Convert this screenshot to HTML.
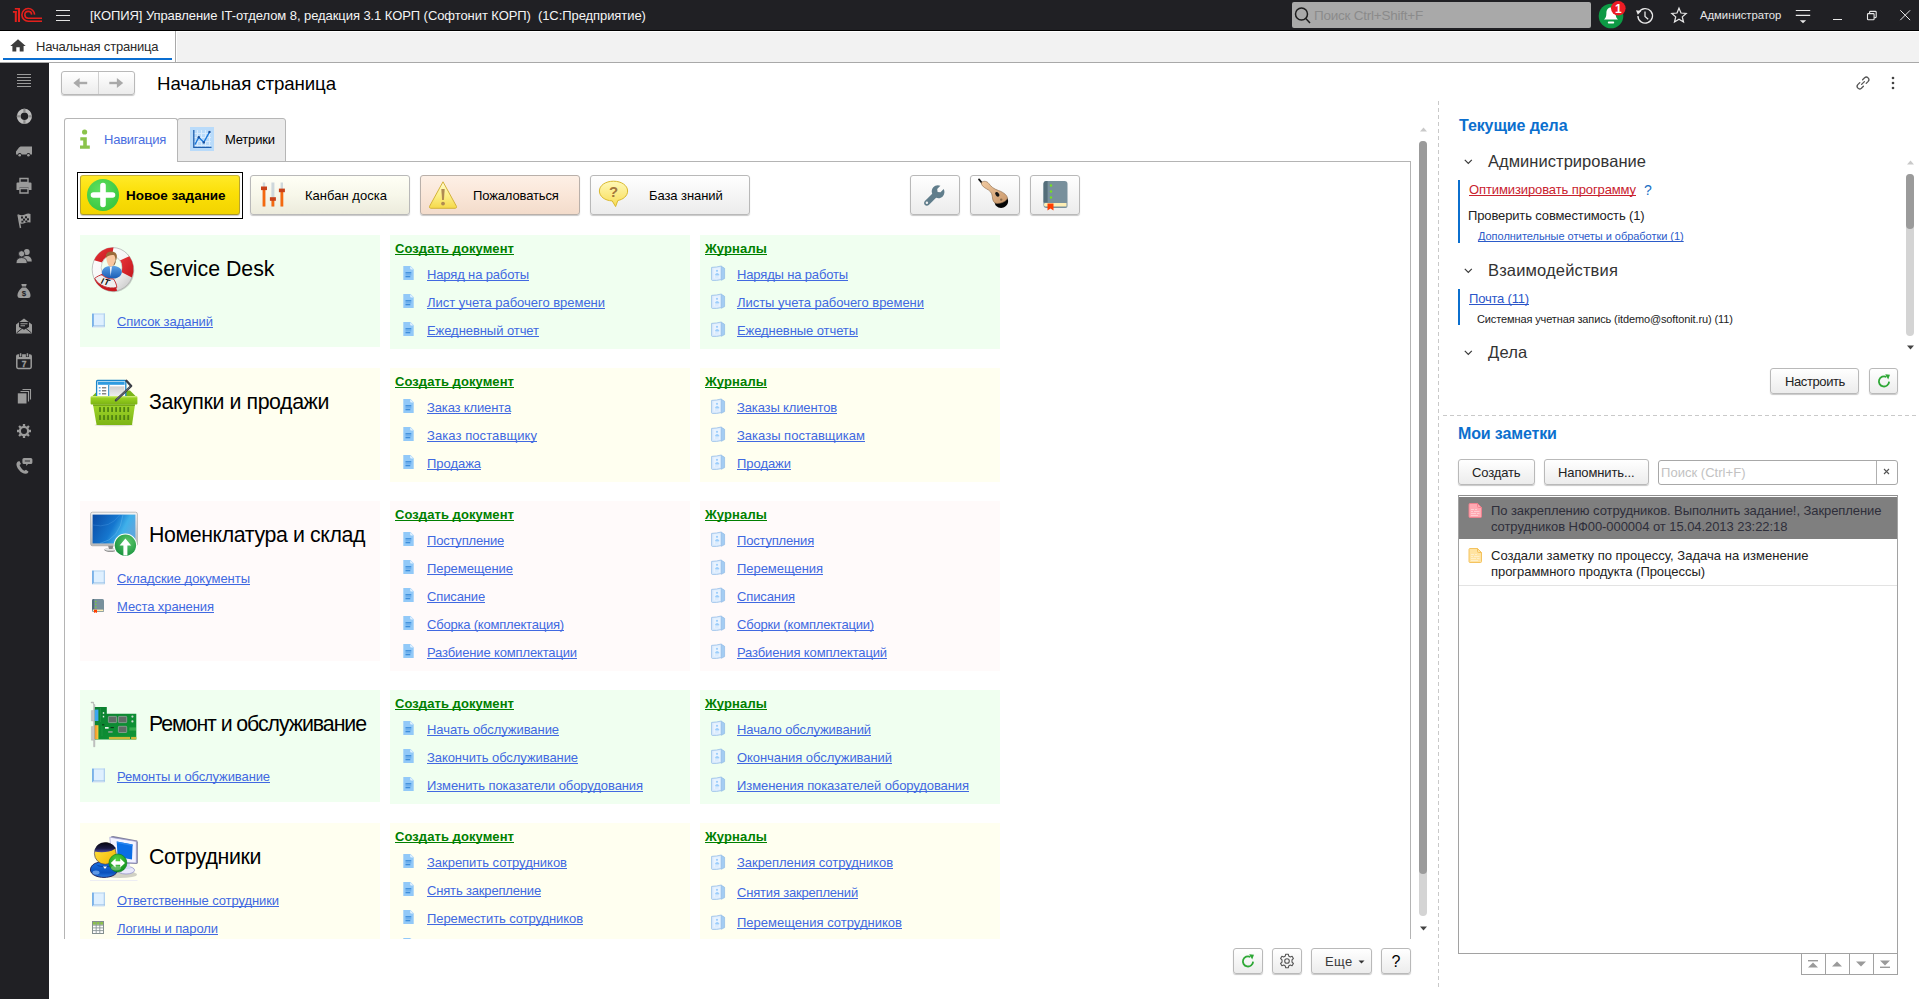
<!DOCTYPE html><html lang="ru"><head><meta charset="utf-8"><title>Начальная страница</title><style>
*{box-sizing:border-box;margin:0;padding:0}
html,body{width:1919px;height:999px;overflow:hidden;background:#fff}
body{font-family:"Liberation Sans",sans-serif;font-size:13px;color:#000;position:relative}
.a{position:absolute}
.t{position:absolute;white-space:pre;line-height:16px;height:16px}
.lnk{color:#4169e1;text-decoration:underline;text-underline-offset:1px;text-decoration-skip-ink:none;text-decoration-thickness:1px}
.gh{color:#008000;font-weight:bold;text-decoration:underline;text-underline-offset:1px;text-decoration-skip-ink:none;text-decoration-thickness:1px}
.btn{position:absolute;border:1px solid #b9b9b9;border-radius:3px;background:linear-gradient(#ffffff,#ececec);box-shadow:0 1px 1px rgba(0,0,0,.22)}
.card{position:absolute}
svg{position:absolute;overflow:visible}
</style></head><body>
<div class="a" style="left:0px;top:0px;width:1919px;height:30px;background:#202024"></div>
<div class="a" style="left:0px;top:30px;width:1919px;height:1px;background:#000"></div>
<svg style="left:12px;top:7px" width="32" height="17" viewBox="0 0 32 17"><g fill="#e3201c"><rect x="5.900" y="1" width="2.100" height="14"/><rect x="2.800" y="1" width="5.200" height="1.600"/><rect x="2.800" y="4" width="2" height="11"/><rect x="0.900" y="4" width="3.900" height="1.800"/></g><g fill="none" stroke="#e3201c" stroke-width="1.600"><path d="M22.600 7.600A6.350 6.350 0 1 0 16.300 14.200H30"/><path d="M19.650 7.600A3.400 3.400 0 1 0 16.300 11.200H30"/></g></svg>
<svg style="left:56px;top:9px" width="15" height="13" viewBox="0 0 15 13"><g stroke="#e2e2e2" stroke-width="1.150"><path d="M0 1.5H14M0 6.5H14M0 11.5H14"/></g></svg>
<div class="t " style="left:90px;top:8px;font-size:13px;color:#f4f4f4;letter-spacing:-0.07px;">[КОПИЯ] Управление IT-отделом 8, редакция 3.1 КОРП (Софтонит КОРП)  (1С:Предприятие)</div>
<div class="a" style="left:1292px;top:2px;width:299px;height:26px;background:#a9a9a9;border-radius:2px"></div>
<svg style="left:1294px;top:6px" width="18" height="18" viewBox="0 0 18 18"><g fill="none" stroke="#1c1c1c" stroke-width="1.5"><circle cx="7.5" cy="8" r="6"/><path d="M11.8 12.6L16 17"/></g></svg>
<div class="t " style="left:1314px;top:8px;font-size:13.5px;color:#8b8b8b;letter-spacing:-0.233px;">Поиск Ctrl+Shift+F</div>
<svg style="left:1598px;top:2px" width="28" height="28" viewBox="0 0 28 28"><circle cx="13" cy="14" r="12.3" fill="#0d9a45"/><path d="M13 5.6c-3.3 0-4.6 2.7-4.6 5.6 0 3.3-1 5-2.4 6.3h14c-1.4-1.3-2.4-3-2.4-6.3 0-2.9-1.300-5.600-4.600-5.600z" fill="#fff"/><rect x="9.800" y="19.6" width="6.4" height="1.8" rx=".9" fill="#fff"/><circle cx="20.3" cy="6.300" r="7.300" fill="#ec1c24"/><text x="20.3" y="10.600" font-size="12" font-weight="bold" fill="#fff" text-anchor="middle" font-family="Liberation Sans,sans-serif">1</text></svg>
<svg style="left:1635px;top:6px" width="20" height="20" viewBox="0 0 20 20"><g fill="none" stroke="#e8e8e8" stroke-width="1.300"><path d="M4 6A7.300 7.300 0 1 1 2.900 10"/><path d="M10 5.600V10.400L13.200 13.200"/></g><path d="M1 4.200L6.300 5L2.800 8.800Z" fill="#e8e8e8"/></svg>
<svg style="left:1671px;top:7px" width="16" height="16" viewBox="0 0 16 16"><path d="M8 1.200L10 6L15.200 6.500L11.300 9.900L12.500 15L8 12.300L3.500 15L4.700 9.900L0.800 6.500L6 6Z" fill="none" stroke="#e8e8e8" stroke-width="1.250" stroke-linejoin="miter"/></svg>
<div class="t " style="left:1700px;top:7px;font-size:11.3px;color:#e6e6e6;letter-spacing:-0.009px;">Администратор</div>
<svg style="left:1795px;top:9px" width="16" height="15" viewBox="0 0 16 15"><g stroke="#e8e8e8" stroke-width="1.100"><path d="M0.800 1.500H15.200M0.800 6.400H15.200"/></g><path d="M4.800 11.200H11.200L8 14.200Z" fill="#e8e8e8"/></svg>
<div class="a" style="left:1833px;top:19px;width:9px;height:1px;background:#e8e8e8"></div>
<svg style="left:1866px;top:10px" width="12" height="12" viewBox="0 0 12 12"><g fill="none" stroke="#e8e8e8" stroke-width="1.100"><rect x="1.500" y="3.600" width="6.600" height="6.200" rx=".8"/><path d="M3.600 3.400V2.200Q3.600 1.400 4.400 1.400H9.400Q10.200 1.400 10.200 2.200V6.800Q10.200 7.600 9.400 7.600H8.300"/></g></svg>
<svg style="left:1899px;top:9px" width="13" height="13" viewBox="0 0 13 13"><g stroke="#e8e8e8" stroke-width="1"><path d="M1.300 1.300L11.100 11.100M11.100 1.300L1.300 11.100"/></g></svg>
<div class="a" style="left:0px;top:31px;width:1919px;height:31px;background:#f2f2f2;border-top:1px solid #fff"></div>
<div class="a" style="left:0px;top:31px;width:175px;height:32px;background:#fff"></div>
<div class="a" style="left:175px;top:31px;width:1px;height:31px;background:#a9a9a9"></div>
<div class="a" style="left:176px;top:31px;width:1px;height:31px;background:#fff"></div>
<div class="a" style="left:0px;top:62px;width:1919px;height:1px;background:#a9a9a9"></div>
<div class="a" style="left:3px;top:58px;width:169px;height:2px;background:#0a6ed1"></div>
<svg style="left:10px;top:39px" width="16" height="13" viewBox="0 0 16 13"><path d="M8 0.300L0.300 7H2.400V12.600H6.300V8.300H9.700V12.600H13.600V7H15.700Z" fill="#3d3d3d"/></svg>
<div class="t " style="left:36px;top:39px;font-size:13px;color:#2a2a2a;letter-spacing:-0.19px;">Начальная страница</div>
<div class="a" style="left:0px;top:63px;width:49px;height:936px;background:#202024"></div>
<svg style="left:14px;top:70px" width="20" height="20" viewBox="0 0 20 20"><g stroke="#9b9b9b" stroke-width="1"><path d="M3 4.500H17M3 7.500H17M3 10.500H17M3 13.500H17M3 16.500H17"/></g></svg>
<svg style="left:14px;top:106px" width="20" height="20" viewBox="0 0 20 20"><circle cx="10.400" cy="10.300" r="5.700" fill="none" stroke="#bdbdbd" stroke-width="3.800"/><g fill="#8a8a8a"><rect x="9.300" y="2.700" width="2.200" height="3.800"/><rect x="9.300" y="14.100" width="2.200" height="3.800"/><rect x="2.800" y="9.200" width="3.800" height="2.200"/><rect x="14.200" y="9.200" width="3.800" height="2.200"/></g></svg>
<svg style="left:14px;top:141px" width="20" height="20" viewBox="0 0 20 20"><path d="M6.500 5.500H18V13.500H16.300A1.900 1.900 0 0 0 12.600 13.500H7.600A1.900 1.900 0 0 0 3.900 13.500H2V10.500L5 6.500Z" fill="#9b9b9b"/><circle cx="5.700" cy="14.200" r="1.300" fill="#9b9b9b"/><circle cx="14.400" cy="14.200" r="1.300" fill="#9b9b9b"/></svg>
<svg style="left:14px;top:176px" width="20" height="20" viewBox="0 0 20 20"><path d="M6 2.500H14V6.500H6Z" fill="none" stroke="#9b9b9b" stroke-width="1.400"/><path d="M2.500 7.500Q2.500 6.500 3.500 6.500H16.500Q17.500 6.500 17.500 7.500V14H14.500V11.500H5.500V14H2.500Z" fill="#9b9b9b"/><path d="M6 12.500H14V17H6Z" fill="none" stroke="#9b9b9b" stroke-width="1.400"/></svg>
<svg style="left:14px;top:211px" width="20" height="20" viewBox="0 0 20 20"><path d="M4 3.500L6.500 17" stroke="#9b9b9b" stroke-width="1.400"/><path d="M4.500 3.500Q8 5 11 3.500T16.500 3L16.500 11.500Q13 11 11 12T5.800 12.500Z" fill="#9b9b9b"/><g fill="#202024"><rect x="7" y="5.500" width="2" height="2"/><rect x="11" y="5.300" width="2" height="2"/><rect x="9" y="7.600" width="2" height="2"/><rect x="13" y="7.300" width="2" height="2"/><rect x="7.400" y="9.700" width="2" height="1.800"/><rect x="11.300" y="9.500" width="2" height="1.800"/></g></svg>
<svg style="left:14px;top:246px" width="20" height="20" viewBox="0 0 20 20"><circle cx="12.800" cy="6" r="2.900" fill="#9b9b9b"/><path d="M8 15.500Q8 10 12.800 10T17.800 15.500Z" fill="#9b9b9b"/><circle cx="7.600" cy="7.800" r="3.100" fill="#9b9b9b" stroke="#202024" stroke-width=".8"/><path d="M2 17.500Q2 11.600 7.600 11.600T13.200 17.500Z" fill="#9b9b9b" stroke="#202024" stroke-width=".8"/></svg>
<svg style="left:14px;top:281px" width="20" height="20" viewBox="0 0 20 20"><path d="M7.300 3H12.700L12 5.500H8Z" fill="#9b9b9b"/><path d="M8 6.500H12Q16.500 10.500 16.500 14.500Q16.500 17 14 17H6Q3.500 17 3.500 14.500Q3.500 10.500 8 6.500Z" fill="#9b9b9b"/><text x="10" y="15.200" font-size="8" font-weight="bold" fill="#202024" text-anchor="middle" font-family="Liberation Sans,sans-serif">$</text></svg>
<svg style="left:14px;top:316px" width="20" height="20" viewBox="0 0 20 20"><path d="M2 8.500L10 2.500L18 8.500V17.500H2Z" fill="#9b9b9b"/><path d="M5 6H15V11L10 13.800L5 11Z" fill="#202024"/><path d="M6.500 7.700H13.500M6.500 9.700H11" stroke="#9b9b9b" stroke-width="1.100"/><path d="M2.500 17L8 12.500M17.500 17L12 12.500" stroke="#202024" stroke-width=".9"/></svg>
<svg style="left:14px;top:351px" width="20" height="20" viewBox="0 0 20 20"><rect x="2.800" y="4" width="14.400" height="13.400" rx="1.300" fill="none" stroke="#9b9b9b" stroke-width="1.500"/><rect x="2.800" y="4" width="14.400" height="4.200" fill="#9b9b9b"/><path d="M6.600 2V6M13.400 2V6" stroke="#202024" stroke-width="3"/><path d="M6.600 2.200V5.600M13.400 2.200V5.600" stroke="#9b9b9b" stroke-width="1.500"/><text x="10" y="15.800" font-size="8.500" font-weight="bold" fill="#9b9b9b" text-anchor="middle" font-family="Liberation Sans,sans-serif" stroke="#9b9b9b" stroke-width=".3">7</text></svg>
<svg style="left:14px;top:386px" width="20" height="20" viewBox="0 0 20 20"><path d="M8.500 3.500H16.500V13.500" fill="none" stroke="#9b9b9b" stroke-width="1.100"/><path d="M6.500 5.500H14.500V15.500" fill="none" stroke="#9b9b9b" stroke-width="1.100"/><rect x="3.800" y="7.300" width="8.700" height="10.200" fill="#9b9b9b"/></svg>
<svg style="left:14px;top:421px" width="20" height="20" viewBox="0 0 20 20"><circle cx="10" cy="10" r="4.100" fill="none" stroke="#9b9b9b" stroke-width="2.200"/><g stroke="#9b9b9b" stroke-width="2.300"><path d="M10 3V5.400M10 14.600V17M3 10H5.400M14.600 10H17M5.050 5.050L6.750 6.750M13.250 13.250L14.950 14.950M5.050 14.950L6.750 13.250M13.250 6.750L14.950 5.050"/></g></svg>
<svg style="left:14px;top:456px" width="20" height="20" viewBox="0 0 20 20"><path d="M2.600 7.200Q1.800 10 5 14T12 17.800Q13.800 17.600 14.600 15.800L12 13.800L10.300 14.800Q8.600 14 7.200 12T5.600 9L7 8L5.400 5Q3 5.600 2.600 7.200Z" fill="#9b9b9b"/><path d="M10 2H16.800Q18.400 2 18.400 3.600V6.400Q18.400 8 16.800 8H14L12.200 10V8H10Q8.400 8 8.400 6.400V3.600Q8.400 2 10 2Z" fill="#9b9b9b"/><path d="M10.800 5H16" stroke="#202024" stroke-width=".9"/></svg>
<div class="btn" style="left:61px;top:71px;width:74px;height:24px;"></div>
<div class="a" style="left:98px;top:72px;width:1px;height:22px;background:#d0d0d0"></div>
<svg style="left:73px;top:77px" width="15" height="12" viewBox="0 0 15 12"><path d="M14.200 6H4" stroke="#a9a9a9" stroke-width="2.400" fill="none"/><path d="M0.300 6L6.600 0.900V11.100Z" fill="#a9a9a9"/></svg>
<svg style="left:109px;top:77px" width="15" height="12" viewBox="0 0 15 12"><path d="M0.300 6H10.500" stroke="#a9a9a9" stroke-width="2.400" fill="none"/><path d="M14.200 6L7.900 0.900V11.100Z" fill="#a9a9a9"/></svg>
<div class="t " style="left:157px;top:76px;font-size:18.67px;color:#000;letter-spacing:-0.084px;height:24px;line-height:24px;margin-top:-4px;">Начальная страница</div>
<svg style="left:1854px;top:74px" width="18" height="18" viewBox="0 0 18 18"><g fill="none" stroke="#555" stroke-width="1.300" stroke-linecap="round"><path d="M7.600 10.400L10.400 7.600"/><path d="M8.600 5.800L10.600 3.800A2.550 2.550 0 0 1 14.200 7.400L12.200 9.400"/><path d="M9.400 12.200L7.400 14.200A2.550 2.550 0 0 1 3.800 10.600L5.800 8.600"/></g></svg>
<svg style="left:1891px;top:76px" width="4" height="14" viewBox="0 0 4 14"><g fill="#444"><circle cx="2" cy="2" r="1.300"/><circle cx="2" cy="7" r="1.300"/><circle cx="2" cy="12" r="1.300"/></g></svg>
<div class="a" style="left:177px;top:118px;width:109px;height:44px;background:#ebebeb;border:1px solid #b6b6b6;border-radius:3px 3px 0 0"></div>
<div class="a" style="left:64px;top:161px;width:1347px;height:778px;border:1px solid #b4b4b4;border-bottom:none"></div>
<div class="a" style="left:64px;top:118px;width:114px;height:44px;background:#fff;border:1px solid #b6b6b6;border-bottom:none;border-radius:3px 3px 0 0"></div>
<svg style="left:79px;top:129px" width="12" height="21" viewBox="0 0 12 21"><circle cx="5.600" cy="3" r="2.600" fill="#8bc34a"/><path d="M1.300 8.200H7.800V16.400H10.800V19.800H1V16.400H4.200V11.400H1.300Z" fill="#8bc34a"/></svg>
<div class="t " style="left:104px;top:132px;font-size:13px;color:#4a6ee0;letter-spacing:-0.237px;">Навигация</div>
<svg style="left:190px;top:127px" width="24" height="24" viewBox="0 0 24 24"><rect width="24" height="24" fill="#b9dbfa"/><g stroke="#d9ecfd" stroke-width="1"><path d="M7.500 3V21M11.500 3V21M15.500 3V21M19.500 3V21M3 6.500H21M3 10.500H21M3 14.500H21M3 18.500H21"/></g><path d="M3.800 3V20.400H21.500" fill="none" stroke="#1f5fae" stroke-width="1.300"/><path d="M5 17.500L8.800 10.200L13.800 15.400L19.500 5" fill="none" stroke="#1976d8" stroke-width="1.400"/><g fill="#1b4f9a"><circle cx="8.800" cy="10.200" r="1.200"/><circle cx="13.800" cy="15.400" r="1.200"/><circle cx="19.500" cy="5" r="1.200"/></g></svg>
<div class="t " style="left:225px;top:132px;font-size:13px;color:#000;letter-spacing:-0.203px;">Метрики</div>
<div class="a" style="left:65px;top:162px;width:1345px;height:777px;overflow:hidden">
<div class="a" style="left:12px;top:10px;width:166px;height:47px;border:1px solid #000"></div>
<div class="btn" style="left:15px;top:13px;width:160px;height:40px;background:linear-gradient(#ffea28,#fbdf08 45%,#f2d400);border-color:#c7b23a #b9a52e #a8962a"></div>
<svg style="left:22px;top:17px" width="32" height="32" viewBox="0 0 32 32"><defs><radialGradient id="gpl" cx=".4" cy=".35" r=".75"><stop offset="0" stop-color="#5fe060"/><stop offset="1" stop-color="#36c43c"/></radialGradient></defs><circle cx="16" cy="16" r="16" fill="url(#gpl)"/><path d="M16 6.500V25.500M6.500 16H25.500" stroke="#fff" stroke-width="5.600" stroke-linecap="round"/></svg>
<div class="t " style="left:61px;top:26px;font-size:13.5px;color:#000;font-weight:bold;letter-spacing:-0.008px;">Новое задание</div>
<div class="btn" style="left:185px;top:13px;width:160px;height:40px;background:linear-gradient(#fffff6,#f7f7ea 50%,#ecebdc)"></div>
<svg style="left:195px;top:20px" width="26" height="26" viewBox="0 0 26 26"><g><rect x="2.800" y="0.500" width="2.400" height="24" fill="#cfd8dc"/><rect x="11.400" y="0.500" width="3" height="24" fill="#cfd8dc"/><rect x="20.600" y="0.500" width="2.400" height="24" fill="#cfd8dc"/><rect x="2.600" y="6" width="2.800" height="18.500" fill="#f4690f"/><rect x="11.500" y="17" width="2.800" height="7.500" fill="#f4690f"/><rect x="20.500" y="8.500" width="2.800" height="16" fill="#f4690f"/><rect x="1" y="4.500" width="6" height="3.600" fill="#c8421a"/><rect x="9.900" y="15.200" width="6" height="3.600" fill="#c8421a"/><rect x="18.900" y="6.600" width="6" height="3.600" fill="#c8421a"/></g></svg>
<div class="t " style="left:240px;top:26px;font-size:13px;color:#000;letter-spacing:0.027px;">Канбан доска</div>
<div class="btn" style="left:355px;top:13px;width:160px;height:40px;background:linear-gradient(#fdf0e6,#fae6d8 50%,#f3dccb);border-color:#b9b0aa"></div>
<svg style="left:363px;top:18px" width="30" height="30" viewBox="0 0 30 30"><defs><linearGradient id="gw" x1="0" y1="0" x2="0" y2="1"><stop offset="0" stop-color="#fffbd0"/><stop offset=".5" stop-color="#fdf08a"/><stop offset="1" stop-color="#f5d94a"/></linearGradient></defs><path d="M15 1.800L28.500 26.400Q29 28 27.300 28.300H2.700Q1 28 1.500 26.400Z" fill="url(#gw)" stroke="#d4b23a" stroke-width="1" stroke-linejoin="round"/><path d="M13.300 9H16.700L15.900 20H14.100Z" fill="#b08a52"/><circle cx="15" cy="23.600" r="1.900" fill="#b08a52"/></svg>
<div class="t " style="left:408px;top:26px;font-size:13px;color:#000;letter-spacing:-0.133px;">Пожаловаться</div>
<div class="btn" style="left:525px;top:13px;width:160px;height:40px;"></div>
<svg style="left:533px;top:18px" width="32" height="30" viewBox="0 0 32 30"><defs><linearGradient id="gq" x1="0" y1="0" x2="0" y2="1"><stop offset="0" stop-color="#fff9b8"/><stop offset="1" stop-color="#f8dc55"/></linearGradient></defs><path d="M15.500 1.200C23.500 1.200 29.600 5.400 29.600 11C29.600 16 25 19.600 19.800 20.500L17.600 26.600L14.200 20.900C6.800 20.600 1.400 16.400 1.400 11C1.400 5.400 7.500 1.200 15.500 1.200Z" fill="url(#gq)" stroke="#d9b92e" stroke-width="1"/><text x="15.500" y="16.500" font-size="15" font-weight="bold" fill="#a3763c" text-anchor="middle" font-family="Liberation Sans,sans-serif">?</text></svg>
<div class="t " style="left:584px;top:26px;font-size:13px;color:#000;letter-spacing:-0.082px;">База знаний</div>
<div class="btn" style="left:845px;top:13px;width:50px;height:40px;"></div>
<svg style="left:858px;top:21px" width="24" height="24" viewBox="0 0 24 24"><path d="M20.700 6.100L17.500 9.300L14.600 8.900L14.200 6L17.400 2.800C14.900 1.700 12 2.300 10.300 4.300C8.600 6.200 8.300 8.700 9.200 10.800L1.900 18.100C0.800 19.200 0.800 20.900 1.900 22C3 23.100 4.700 23.100 5.800 22L13.100 14.700C15.300 15.600 17.900 15.200 19.700 13.400C21.600 11.500 22 8.500 20.700 6.100ZM3.900 21.100A1.250 1.250 0 1 1 3.900 18.600A1.250 1.250 0 0 1 3.900 21.100Z" fill="#607d8b" fill-rule="evenodd"/></svg>
<div class="btn" style="left:905px;top:13px;width:50px;height:40px;"></div>
<svg style="left:912px;top:15px" width="34" height="34" viewBox="0 0 34 34"><defs><linearGradient id="gs" x1="0" y1="0" x2="1" y2="1"><stop offset="0" stop-color="#f0c9a0"/><stop offset="1" stop-color="#c9976a"/></linearGradient></defs><path d="M2 2.400L5 6" stroke="#111" stroke-width="1.800" stroke-linecap="round"/><path d="M17.800 24.500C17 29 22 32 26.500 30.500C30.500 29 32.500 24.500 30 20.500Z" fill="#050505"/><path d="M4.600 5.400C6.500 3.600 10 4 11.800 6.500C14 9.500 16.500 11.800 21.500 13.500C27 15.400 30.800 18.800 30.300 21.600C29.800 24 24 26.800 19.600 26.400C16.400 26 15.600 23 15.300 19.400C15 15.400 12.500 13.500 9.500 11.800C6.500 10.200 3.800 7.800 4.600 5.400Z" fill="url(#gs)" stroke="#8a6a4a" stroke-width=".6"/><ellipse cx="20.300" cy="17.300" rx="2.600" ry="1.700" transform="rotate(50 20.300 17.300)" fill="#151515"/><circle cx="24.200" cy="22.600" r="1.200" fill="#8a6a4a"/></svg>
<div class="btn" style="left:965px;top:13px;width:50px;height:40px;"></div>
<svg style="left:978px;top:19px" width="25" height="30" viewBox="0 0 25 30"><path d="M3.500 0H21.500Q24.500 0 24.500 3V25Q24.500 27 22.500 27H3.500Q0.500 27 0.500 24V3Q0.500 0 3.500 0Z" fill="#78909c"/><path d="M3.500 0H4.600V21.500H0.500V3Q0.500 0 3.500 0Z" fill="#546e7a"/><path d="M2 22H23.500V25.400H2Q1 25.400 1 23.700Q1 22 2 22Z" fill="#fdeeb5"/><path d="M4.500 22.600H10.500V29.600L7.500 27.600L4.500 29.600Z" fill="#ff3d00"/><g fill="#76e01f"><circle cx="8" cy="4.500" r="1.200"/><circle cx="8" cy="10.500" r="1.200"/><circle cx="8" cy="16.500" r="1.200"/></g></svg>
<div class="a" style="left:15px;top:73px;width:300px;height:112px;background:#f0fff0"></div>
<div class="a" style="left:325px;top:73px;width:300px;height:114px;background:#f0fff0"></div>
<div class="a" style="left:635px;top:73px;width:300px;height:114px;background:#f0fff0"></div>
<svg style="left:25px;top:83px" width="48" height="48" viewBox="0 0 48 48"><defs><linearGradient id="lbw" x1="0" y1="0" x2="1" y2="1"><stop offset="0" stop-color="#ffffff"/><stop offset=".6" stop-color="#f4f4f4"/><stop offset="1" stop-color="#bdbdbd"/></linearGradient><linearGradient id="lbs" x1="0" y1="0" x2="0" y2="1"><stop offset="0" stop-color="#5aa0e6"/><stop offset="1" stop-color="#1a5cb4"/></linearGradient><linearGradient id="lbr" x1="0" y1="0" x2="1" y2="1"><stop offset="0" stop-color="#e8363a"/><stop offset="1" stop-color="#c4161c"/></linearGradient></defs><ellipse cx="23.7" cy="25.4" rx="20.6" ry="21.8" fill="#777" opacity=".35"/><ellipse cx="22.8" cy="24.4" rx="20.6" ry="21.8" fill="url(#lbw)" stroke="#a9a9a9" stroke-width=".7"/><path d="M4.13 15.19A20.6 21.8 0 0 1 23.52 2.61L21.96 10.81A10.4 11.8 0 0 0 12.17 17.61Z" fill="url(#lbr)"/><path d="M39.25 11.28A20.6 21.8 0 0 1 41.90 32.57L31.24 27.02A10.4 11.8 0 0 0 29.91 15.50Z" fill="url(#lbr)"/><path d="M27.08 45.72A20.6 21.8 0 0 1 4.61 34.63L12.42 28.14A10.4 11.8 0 0 0 23.76 34.14Z" fill="#c8181e"/><ellipse cx="21.6" cy="22.6" rx="10.4" ry="11.8" fill="#f0fff0" stroke="#b4b4b4" stroke-width=".6"/><path d="M11.800 27.400C12.400 22.800 16.500 21.200 19.500 21.200L24.500 21C28.500 21.400 31.800 23.600 31.800 27.400C31.400 31.200 27.200 33.600 22 33.600C16.800 33.600 12 31.400 11.800 27.400Z" fill="url(#lbs)"/><path d="M19.800 22L22 21.600L20.600 31Z" fill="#eef3fa"/><path d="M16.300 12C16.300 8.800 18.500 7.600 20.800 7.600C23.400 7.600 25.300 9.200 25.300 12.400C25.300 15.400 24.300 18.200 23.400 20C22.400 22 19.400 22 18.300 20C17.200 18 16.300 15 16.300 12Z" fill="#f9c7a0"/><path d="M23.400 20C24 19 24.600 17.500 25 16L25.800 16.600C25.400 18.600 24.600 20 23.800 21Z" fill="#8a5a30"/><path d="M16 12.800C15.200 8.600 18 6.600 21 6.600C24.800 6.600 27.400 8.600 26.800 12.400C26.600 14.200 26 15.800 25.200 16.800C25.600 14 25.200 11.600 24.200 10.200C21.800 9.600 18.200 10 16 12.800Z" fill="#9a6a3a"/><path d="M4.600 33.400C7.400 31.200 10 30 12 29.800C15 32.800 19.500 34.200 23.500 34C25.200 36.400 26.600 39.400 26.800 42.400C19 44.400 8.800 41 4.600 33.400Z" fill="#efefef" stroke="#c0252a" stroke-width=".9"/><text x="10.600" y="38.400" font-size="8.500" font-weight="bold" fill="#0a0a0a" transform="rotate(15 10.600 38.400)" font-family="Liberation Sans,sans-serif" font-style="italic" letter-spacing=".6">IT</text></svg>
<div class="t " style="left:84px;top:99px;font-size:21.33px;color:#000;letter-spacing:-0.012px;height:26px;line-height:26px;margin-top:-5px;">Service Desk</div>
<svg style="left:27px;top:151px" width="13" height="15" viewBox="0 0 13 15"><rect x="0" y=".6" width="13" height="14" rx=".8" fill="#dff0ff"/><rect x="0" y=".4" width="13" height="1.300" fill="#c2dcf3"/><rect x="11.700" y=".6" width="1.300" height="13" fill="#b0d0ee"/><rect x="0" y="12.400" width="13" height="1.200" fill="#9cc2e8"/><rect x="0.500" y="13.600" width="12" height="1" fill="#dfe9f0"/><path d="M0 .8H1.900V12.600L0 14.400Z" fill="#7ab1e8"/></svg>
<div class="t lnk" style="left:52px;top:152px;font-size:13px;letter-spacing:-0.041px;">Список заданий</div>
<div class="t gh" style="left:330px;top:79px;font-size:13px;letter-spacing:0.068px;">Создать документ</div>
<svg style="left:338px;top:104px" width="11" height="14" viewBox="0 0 11 14"><path d="M0.300 0H7.400L10.700 3.300V14H0.300Z" fill="#92c9f8"/><path d="M7.200 0.200L10.500 3.500H8.200Q7.200 3.500 7.200 2.500Z" fill="#e3f2ff"/><rect x="2.500" y="6.100" width="5.800" height="1.400" fill="#3d8edb"/><rect x="2.500" y="7.800" width="5.800" height="1.800" fill="#6fb0ec"/><rect x="2.500" y="10" width="4.800" height="1.300" fill="#3d8edb"/></svg>
<div class="t lnk" style="left:362px;top:105px;font-size:13px;letter-spacing:-0.141px;">Наряд на работы</div>
<svg style="left:338px;top:132px" width="11" height="14" viewBox="0 0 11 14"><path d="M0.300 0H7.400L10.700 3.300V14H0.300Z" fill="#92c9f8"/><path d="M7.200 0.200L10.500 3.500H8.200Q7.200 3.500 7.200 2.500Z" fill="#e3f2ff"/><rect x="2.500" y="6.100" width="5.800" height="1.400" fill="#3d8edb"/><rect x="2.500" y="7.800" width="5.800" height="1.800" fill="#6fb0ec"/><rect x="2.500" y="10" width="4.800" height="1.300" fill="#3d8edb"/></svg>
<div class="t lnk" style="left:362px;top:133px;font-size:13px;letter-spacing:-0.027px;">Лист учета рабочего времени</div>
<svg style="left:338px;top:160px" width="11" height="14" viewBox="0 0 11 14"><path d="M0.300 0H7.400L10.700 3.300V14H0.300Z" fill="#92c9f8"/><path d="M7.200 0.200L10.500 3.500H8.200Q7.200 3.500 7.200 2.500Z" fill="#e3f2ff"/><rect x="2.500" y="6.100" width="5.800" height="1.400" fill="#3d8edb"/><rect x="2.500" y="7.800" width="5.800" height="1.800" fill="#6fb0ec"/><rect x="2.500" y="10" width="4.800" height="1.300" fill="#3d8edb"/></svg>
<div class="t lnk" style="left:362px;top:161px;font-size:13px;letter-spacing:-0.065px;">Ежедневный отчет</div>
<div class="t gh" style="left:640px;top:79px;font-size:13px;letter-spacing:0.114px;">Журналы</div>
<svg style="left:646px;top:103px" width="14" height="16" viewBox="0 0 14 16"><path d="M10.300 1.200L13.600 3.300V13.600L10.300 15.300Z" fill="#a4cdf3" stroke="#86b3e2" stroke-width=".6"/><path d="M0.600 2.400Q5.500 2.300 10.300 1V14.600Q5.500 15.800 1.300 15.400Q0.600 15.300 0.600 14.600Z" fill="#dcecfd" stroke="#94bce8" stroke-width=".8"/><rect x="2.600" y="3.400" width="6.400" height="10" fill="#e9f3ff"/><circle cx="6" cy="5.800" r="1.100" fill="#9ccdfb"/><path d="M3.800 10Q6 6.200 8.600 10Q6.200 11 3.800 10Z" fill="#9ccdfb"/><rect x="4" y="11.600" width="3.600" height=".8" fill="#c3defa"/></svg>
<div class="t lnk" style="left:672px;top:105px;font-size:13px;letter-spacing:-0.153px;">Наряды на работы</div>
<svg style="left:646px;top:131px" width="14" height="16" viewBox="0 0 14 16"><path d="M10.300 1.200L13.600 3.300V13.600L10.300 15.300Z" fill="#a4cdf3" stroke="#86b3e2" stroke-width=".6"/><path d="M0.600 2.400Q5.500 2.300 10.300 1V14.600Q5.500 15.800 1.300 15.400Q0.600 15.300 0.600 14.600Z" fill="#dcecfd" stroke="#94bce8" stroke-width=".8"/><rect x="2.600" y="3.400" width="6.400" height="10" fill="#e9f3ff"/><circle cx="6" cy="5.800" r="1.100" fill="#9ccdfb"/><path d="M3.800 10Q6 6.200 8.600 10Q6.200 11 3.800 10Z" fill="#9ccdfb"/><rect x="4" y="11.600" width="3.600" height=".8" fill="#c3defa"/></svg>
<div class="t lnk" style="left:672px;top:133px;font-size:13px;letter-spacing:-0.038px;">Листы учета рабочего времени</div>
<svg style="left:646px;top:159px" width="14" height="16" viewBox="0 0 14 16"><path d="M10.300 1.200L13.600 3.300V13.600L10.300 15.300Z" fill="#a4cdf3" stroke="#86b3e2" stroke-width=".6"/><path d="M0.600 2.400Q5.500 2.300 10.300 1V14.600Q5.500 15.800 1.300 15.400Q0.600 15.300 0.600 14.600Z" fill="#dcecfd" stroke="#94bce8" stroke-width=".8"/><rect x="2.600" y="3.400" width="6.400" height="10" fill="#e9f3ff"/><circle cx="6" cy="5.800" r="1.100" fill="#9ccdfb"/><path d="M3.800 10Q6 6.200 8.600 10Q6.200 11 3.800 10Z" fill="#9ccdfb"/><rect x="4" y="11.600" width="3.600" height=".8" fill="#c3defa"/></svg>
<div class="t lnk" style="left:672px;top:161px;font-size:13px;letter-spacing:-0.08px;">Ежедневные отчеты</div>
<div class="a" style="left:15px;top:206px;width:300px;height:112px;background:#fffff0"></div>
<div class="a" style="left:325px;top:206px;width:300px;height:114px;background:#fffff0"></div>
<div class="a" style="left:635px;top:206px;width:300px;height:114px;background:#fffff0"></div>
<svg style="left:25px;top:216px" width="48" height="48" viewBox="0 0 48 48"><defs><linearGradient id="bkg" x1="0" y1="0" x2="0" y2="1"><stop offset="0" stop-color="#9fd52a"/><stop offset="1" stop-color="#7db515"/></linearGradient><linearGradient id="bkr" x1="0" y1="0" x2="0" y2="1"><stop offset="0" stop-color="#d8f08a"/><stop offset=".25" stop-color="#98d020"/><stop offset="1" stop-color="#7cb414"/></linearGradient><linearGradient id="bkp" x1="0" y1="0" x2="0" y2="1"><stop offset="0" stop-color="#cfcfcf"/><stop offset="1" stop-color="#f2f2f2"/></linearGradient></defs><ellipse cx="24" cy="47" rx="19.500" ry="1.300" fill="#000" opacity=".13"/><path d="M2 18.400L8 12.600H40L46 18.400Z" fill="#79b417"/><rect x="6.600" y="2.500" width="29.200" height="18" rx="1" fill="#fff" stroke="#1b86c9" stroke-width="1.300"/><rect x="7.800" y="3.800" width="26.800" height="3" fill="#2e9be0"/><rect x="18.200" y="7" width="1.100" height="12" fill="#1b86c9"/><rect x="20" y="8.400" width="14.400" height="11" fill="url(#bkp)"/><g fill="#3a9be0"><rect x="8.800" y="9.200" width="1.800" height="1.200"/><rect x="8.800" y="12.200" width="1.800" height="1.200"/><rect x="8.800" y="15.200" width="1.800" height="1.200"/></g><g fill="#6b6b6b"><rect x="12" y="9.200" width="4.200" height="1.200"/><rect x="12" y="12.200" width="4.200" height="1.200"/><rect x="12" y="15.200" width="4.200" height="1.200"/></g><path d="M0.600 19Q0.600 18 1.600 18H46.400Q47.400 18 47.400 19V25.400Q47.400 26.400 46.400 26.400H1.600Q0.600 26.400 0.600 25.400Z" fill="url(#bkr)"/><path d="M3 26.400H45L42 46.900H6.600Z" fill="url(#bkg)"/><path d="M3 26.400H45L44.800 27.800H3.200Z" fill="#6a9c12"/><rect x="9.10" y="29.1" width="1.800" height="5" rx=".5" fill="#4f8212"/><rect x="13.13" y="29.1" width="1.800" height="5" rx=".5" fill="#4f8212"/><rect x="17.16" y="29.1" width="1.800" height="5" rx=".5" fill="#4f8212"/><rect x="21.19" y="29.1" width="1.800" height="5" rx=".5" fill="#4f8212"/><rect x="25.22" y="29.1" width="1.800" height="5" rx=".5" fill="#4f8212"/><rect x="29.25" y="29.1" width="1.800" height="5" rx=".5" fill="#4f8212"/><rect x="33.28" y="29.1" width="1.800" height="5" rx=".5" fill="#4f8212"/><rect x="37.31" y="29.1" width="1.800" height="5" rx=".5" fill="#4f8212"/><rect x="9.10" y="37" width="1.800" height="5" rx=".5" fill="#4f8212"/><rect x="13.13" y="37" width="1.800" height="5" rx=".5" fill="#4f8212"/><rect x="17.16" y="37" width="1.800" height="5" rx=".5" fill="#4f8212"/><rect x="21.19" y="37" width="1.800" height="5" rx=".5" fill="#4f8212"/><rect x="25.22" y="37" width="1.800" height="5" rx=".5" fill="#4f8212"/><rect x="29.25" y="37" width="1.800" height="5" rx=".5" fill="#4f8212"/><rect x="33.28" y="37" width="1.800" height="5" rx=".5" fill="#4f8212"/><rect x="37.31" y="37" width="1.800" height="5" rx=".5" fill="#4f8212"/><path d="M25.900 22.400L41.200 8L36.400 2.700" fill="none" stroke="#3a3d45" stroke-width="2.300" stroke-linecap="round" stroke-linejoin="round"/><path d="M26.300 22L40.200 8.600" stroke="#8d939c" stroke-width=".7"/></svg>
<div class="t " style="left:84px;top:232px;font-size:21.33px;color:#000;letter-spacing:-0.403px;height:26px;line-height:26px;margin-top:-5px;">Закупки и продажи</div>
<div class="t gh" style="left:330px;top:212px;font-size:13px;letter-spacing:0.068px;">Создать документ</div>
<svg style="left:338px;top:237px" width="11" height="14" viewBox="0 0 11 14"><path d="M0.300 0H7.400L10.700 3.300V14H0.300Z" fill="#92c9f8"/><path d="M7.200 0.200L10.500 3.500H8.200Q7.200 3.500 7.200 2.500Z" fill="#e3f2ff"/><rect x="2.500" y="6.100" width="5.800" height="1.400" fill="#3d8edb"/><rect x="2.500" y="7.800" width="5.800" height="1.800" fill="#6fb0ec"/><rect x="2.500" y="10" width="4.800" height="1.300" fill="#3d8edb"/></svg>
<div class="t lnk" style="left:362px;top:238px;font-size:13px;letter-spacing:-0.142px;">Заказ клиента</div>
<svg style="left:338px;top:265px" width="11" height="14" viewBox="0 0 11 14"><path d="M0.300 0H7.400L10.700 3.300V14H0.300Z" fill="#92c9f8"/><path d="M7.200 0.200L10.500 3.500H8.200Q7.200 3.500 7.200 2.500Z" fill="#e3f2ff"/><rect x="2.500" y="6.100" width="5.800" height="1.400" fill="#3d8edb"/><rect x="2.500" y="7.800" width="5.800" height="1.800" fill="#6fb0ec"/><rect x="2.500" y="10" width="4.800" height="1.300" fill="#3d8edb"/></svg>
<div class="t lnk" style="left:362px;top:266px;font-size:13px;letter-spacing:0.08px;">Заказ поставщику</div>
<svg style="left:338px;top:293px" width="11" height="14" viewBox="0 0 11 14"><path d="M0.300 0H7.400L10.700 3.300V14H0.300Z" fill="#92c9f8"/><path d="M7.200 0.200L10.500 3.500H8.200Q7.200 3.500 7.200 2.500Z" fill="#e3f2ff"/><rect x="2.500" y="6.100" width="5.800" height="1.400" fill="#3d8edb"/><rect x="2.500" y="7.800" width="5.800" height="1.800" fill="#6fb0ec"/><rect x="2.500" y="10" width="4.800" height="1.300" fill="#3d8edb"/></svg>
<div class="t lnk" style="left:362px;top:294px;font-size:13px;letter-spacing:-0.038px;">Продажа</div>
<div class="t gh" style="left:640px;top:212px;font-size:13px;letter-spacing:0.114px;">Журналы</div>
<svg style="left:646px;top:236px" width="14" height="16" viewBox="0 0 14 16"><path d="M10.300 1.200L13.600 3.300V13.600L10.300 15.300Z" fill="#a4cdf3" stroke="#86b3e2" stroke-width=".6"/><path d="M0.600 2.400Q5.500 2.300 10.300 1V14.600Q5.500 15.800 1.300 15.400Q0.600 15.300 0.600 14.600Z" fill="#dcecfd" stroke="#94bce8" stroke-width=".8"/><rect x="2.600" y="3.400" width="6.400" height="10" fill="#e9f3ff"/><circle cx="6" cy="5.800" r="1.100" fill="#9ccdfb"/><path d="M3.800 10Q6 6.200 8.600 10Q6.200 11 3.800 10Z" fill="#9ccdfb"/><rect x="4" y="11.600" width="3.600" height=".8" fill="#c3defa"/></svg>
<div class="t lnk" style="left:672px;top:238px;font-size:13px;letter-spacing:-0.14px;">Заказы клиентов</div>
<svg style="left:646px;top:264px" width="14" height="16" viewBox="0 0 14 16"><path d="M10.300 1.200L13.600 3.300V13.600L10.300 15.300Z" fill="#a4cdf3" stroke="#86b3e2" stroke-width=".6"/><path d="M0.600 2.400Q5.500 2.300 10.300 1V14.600Q5.500 15.800 1.300 15.400Q0.600 15.300 0.600 14.600Z" fill="#dcecfd" stroke="#94bce8" stroke-width=".8"/><rect x="2.600" y="3.400" width="6.400" height="10" fill="#e9f3ff"/><circle cx="6" cy="5.800" r="1.100" fill="#9ccdfb"/><path d="M3.800 10Q6 6.200 8.600 10Q6.200 11 3.800 10Z" fill="#9ccdfb"/><rect x="4" y="11.600" width="3.600" height=".8" fill="#c3defa"/></svg>
<div class="t lnk" style="left:672px;top:266px;font-size:13px;letter-spacing:0.007px;">Заказы поставщикам</div>
<svg style="left:646px;top:292px" width="14" height="16" viewBox="0 0 14 16"><path d="M10.300 1.200L13.600 3.300V13.600L10.300 15.300Z" fill="#a4cdf3" stroke="#86b3e2" stroke-width=".6"/><path d="M0.600 2.400Q5.500 2.300 10.300 1V14.600Q5.500 15.800 1.300 15.400Q0.600 15.300 0.600 14.600Z" fill="#dcecfd" stroke="#94bce8" stroke-width=".8"/><rect x="2.600" y="3.400" width="6.400" height="10" fill="#e9f3ff"/><circle cx="6" cy="5.800" r="1.100" fill="#9ccdfb"/><path d="M3.800 10Q6 6.200 8.600 10Q6.200 11 3.800 10Z" fill="#9ccdfb"/><rect x="4" y="11.600" width="3.600" height=".8" fill="#c3defa"/></svg>
<div class="t lnk" style="left:672px;top:294px;font-size:13px;letter-spacing:-0.042px;">Продажи</div>
<div class="a" style="left:15px;top:339px;width:300px;height:160px;background:#fffafa"></div>
<div class="a" style="left:325px;top:339px;width:300px;height:170px;background:#fffafa"></div>
<div class="a" style="left:635px;top:339px;width:300px;height:170px;background:#fffafa"></div>
<svg style="left:25px;top:349px" width="48" height="48" viewBox="0 0 48 48"><defs><linearGradient id="mns" x1="0" y1="0" x2="1" y2=".35"><stop offset="0" stop-color="#0b4aa4"/><stop offset=".55" stop-color="#1577cf"/><stop offset=".8" stop-color="#3fb0ea"/><stop offset="1" stop-color="#5aa8e0"/></linearGradient><linearGradient id="mnf" x1="0" y1="0" x2="0" y2="1"><stop offset="0" stop-color="#f4f4f4"/><stop offset="1" stop-color="#b8b8b8"/></linearGradient><radialGradient id="mng" cx=".6" cy=".35" r=".8"><stop offset="0" stop-color="#5cc86a"/><stop offset="1" stop-color="#0f8a38"/></radialGradient></defs><ellipse cx="20.500" cy="38.800" rx="6.200" ry="2" fill="#777"/><ellipse cx="20.500" cy="38.200" rx="5.600" ry="1.500" fill="#e6e6e6"/><path d="M18 34.500H23.500L22.500 38H19Z" fill="#8a8a8a"/><rect x="0.600" y="1.200" width="46.800" height="33.600" rx="1.800" fill="url(#mnf)" stroke="#9a9a9a" stroke-width=".6"/><rect x="2.600" y="3.600" width="42.800" height="28.800" fill="url(#mns)"/><path d="M2.600 14Q20 18 30 3.600" fill="none" stroke="#5aa6ea" stroke-width=".5" opacity=".6"/><path d="M10 32.400Q30 28 33 3.600" fill="none" stroke="#7cc4f4" stroke-width=".6" opacity=".6"/><circle cx="35.400" cy="34.200" r="11.700" fill="#fff"/><circle cx="35.400" cy="34.200" r="10.700" fill="url(#mng)"/><path d="M35.400 27.600L41.200 34.400H37.400V44.500H33.400V34.400H29.600Z" fill="#fff"/></svg>
<div class="t " style="left:84px;top:365px;font-size:21.33px;color:#000;letter-spacing:-0.395px;height:26px;line-height:26px;margin-top:-5px;">Номенклатура и склад</div>
<svg style="left:27px;top:408px" width="13" height="15" viewBox="0 0 13 15"><rect x="0" y=".6" width="13" height="14" rx=".8" fill="#dff0ff"/><rect x="0" y=".4" width="13" height="1.300" fill="#c2dcf3"/><rect x="11.700" y=".6" width="1.300" height="13" fill="#b0d0ee"/><rect x="0" y="12.400" width="13" height="1.200" fill="#9cc2e8"/><rect x="0.500" y="13.600" width="12" height="1" fill="#dfe9f0"/><path d="M0 .8H1.900V12.600L0 14.400Z" fill="#7ab1e8"/></svg>
<div class="t lnk" style="left:52px;top:409px;font-size:13px;letter-spacing:-0.03px;">Складские документы</div>
<svg style="left:27px;top:437px" width="12" height="14" viewBox="0 0 12 14"><path d="M1.500 0H10.500Q12 0 12 1.500V12Q12 13 11 13H1.500Q0 13 0 11.500V1.500Q0 0 1.500 0Z" fill="#78909c"/><path d="M1.500 0H2.200V10.400H0V1.500Q0 0 1.500 0Z" fill="#506b79"/><rect x="1" y="10.600" width="10.300" height="1.600" fill="#fdeeb5"/><path d="M2 10.800H5V14L3.500 13.200L2 14Z" fill="#ff3d00"/><g fill="#7bdc2a"><circle cx="3.800" cy="2.400" r=".7"/><circle cx="3.800" cy="5.300" r=".7"/><circle cx="3.800" cy="8.200" r=".7"/></g></svg>
<div class="t lnk" style="left:52px;top:437px;font-size:13px;letter-spacing:-0.087px;">Места хранения</div>
<div class="t gh" style="left:330px;top:345px;font-size:13px;letter-spacing:0.068px;">Создать документ</div>
<svg style="left:338px;top:370px" width="11" height="14" viewBox="0 0 11 14"><path d="M0.300 0H7.400L10.700 3.300V14H0.300Z" fill="#92c9f8"/><path d="M7.200 0.200L10.500 3.500H8.200Q7.200 3.500 7.200 2.500Z" fill="#e3f2ff"/><rect x="2.500" y="6.100" width="5.800" height="1.400" fill="#3d8edb"/><rect x="2.500" y="7.800" width="5.800" height="1.800" fill="#6fb0ec"/><rect x="2.500" y="10" width="4.800" height="1.300" fill="#3d8edb"/></svg>
<div class="t lnk" style="left:362px;top:371px;font-size:13px;letter-spacing:-0.2px;">Поступление</div>
<svg style="left:338px;top:398px" width="11" height="14" viewBox="0 0 11 14"><path d="M0.300 0H7.400L10.700 3.300V14H0.300Z" fill="#92c9f8"/><path d="M7.200 0.200L10.500 3.500H8.200Q7.200 3.500 7.200 2.500Z" fill="#e3f2ff"/><rect x="2.500" y="6.100" width="5.800" height="1.400" fill="#3d8edb"/><rect x="2.500" y="7.800" width="5.800" height="1.800" fill="#6fb0ec"/><rect x="2.500" y="10" width="4.800" height="1.300" fill="#3d8edb"/></svg>
<div class="t lnk" style="left:362px;top:399px;font-size:13px;letter-spacing:-0.06px;">Перемещение</div>
<svg style="left:338px;top:426px" width="11" height="14" viewBox="0 0 11 14"><path d="M0.300 0H7.400L10.700 3.300V14H0.300Z" fill="#92c9f8"/><path d="M7.200 0.200L10.500 3.500H8.200Q7.200 3.500 7.200 2.500Z" fill="#e3f2ff"/><rect x="2.500" y="6.100" width="5.800" height="1.400" fill="#3d8edb"/><rect x="2.500" y="7.800" width="5.800" height="1.800" fill="#6fb0ec"/><rect x="2.500" y="10" width="4.800" height="1.300" fill="#3d8edb"/></svg>
<div class="t lnk" style="left:362px;top:427px;font-size:13px;letter-spacing:-0.137px;">Списание</div>
<svg style="left:338px;top:454px" width="11" height="14" viewBox="0 0 11 14"><path d="M0.300 0H7.400L10.700 3.300V14H0.300Z" fill="#92c9f8"/><path d="M7.200 0.200L10.500 3.500H8.200Q7.200 3.500 7.200 2.500Z" fill="#e3f2ff"/><rect x="2.500" y="6.100" width="5.800" height="1.400" fill="#3d8edb"/><rect x="2.500" y="7.800" width="5.800" height="1.800" fill="#6fb0ec"/><rect x="2.500" y="10" width="4.800" height="1.300" fill="#3d8edb"/></svg>
<div class="t lnk" style="left:362px;top:455px;font-size:13px;letter-spacing:-0.202px;">Сборка (комплектация)</div>
<svg style="left:338px;top:482px" width="11" height="14" viewBox="0 0 11 14"><path d="M0.300 0H7.400L10.700 3.300V14H0.300Z" fill="#92c9f8"/><path d="M7.200 0.200L10.500 3.500H8.200Q7.200 3.500 7.200 2.500Z" fill="#e3f2ff"/><rect x="2.500" y="6.100" width="5.800" height="1.400" fill="#3d8edb"/><rect x="2.500" y="7.800" width="5.800" height="1.800" fill="#6fb0ec"/><rect x="2.500" y="10" width="4.800" height="1.300" fill="#3d8edb"/></svg>
<div class="t lnk" style="left:362px;top:483px;font-size:13px;letter-spacing:-0.139px;">Разбиение комплектации</div>
<div class="t gh" style="left:640px;top:345px;font-size:13px;letter-spacing:0.114px;">Журналы</div>
<svg style="left:646px;top:369px" width="14" height="16" viewBox="0 0 14 16"><path d="M10.300 1.200L13.600 3.300V13.600L10.300 15.300Z" fill="#a4cdf3" stroke="#86b3e2" stroke-width=".6"/><path d="M0.600 2.400Q5.500 2.300 10.300 1V14.600Q5.500 15.800 1.300 15.400Q0.600 15.300 0.600 14.600Z" fill="#dcecfd" stroke="#94bce8" stroke-width=".8"/><rect x="2.600" y="3.400" width="6.400" height="10" fill="#e9f3ff"/><circle cx="6" cy="5.800" r="1.100" fill="#9ccdfb"/><path d="M3.800 10Q6 6.200 8.600 10Q6.200 11 3.800 10Z" fill="#9ccdfb"/><rect x="4" y="11.600" width="3.600" height=".8" fill="#c3defa"/></svg>
<div class="t lnk" style="left:672px;top:371px;font-size:13px;letter-spacing:-0.183px;">Поступления</div>
<svg style="left:646px;top:397px" width="14" height="16" viewBox="0 0 14 16"><path d="M10.300 1.200L13.600 3.300V13.600L10.300 15.300Z" fill="#a4cdf3" stroke="#86b3e2" stroke-width=".6"/><path d="M0.600 2.400Q5.500 2.300 10.300 1V14.600Q5.500 15.800 1.300 15.400Q0.600 15.300 0.600 14.600Z" fill="#dcecfd" stroke="#94bce8" stroke-width=".8"/><rect x="2.600" y="3.400" width="6.400" height="10" fill="#e9f3ff"/><circle cx="6" cy="5.800" r="1.100" fill="#9ccdfb"/><path d="M3.800 10Q6 6.200 8.600 10Q6.200 11 3.800 10Z" fill="#9ccdfb"/><rect x="4" y="11.600" width="3.600" height=".8" fill="#c3defa"/></svg>
<div class="t lnk" style="left:672px;top:399px;font-size:13px;letter-spacing:-0.043px;">Перемещения</div>
<svg style="left:646px;top:425px" width="14" height="16" viewBox="0 0 14 16"><path d="M10.300 1.200L13.600 3.300V13.600L10.300 15.300Z" fill="#a4cdf3" stroke="#86b3e2" stroke-width=".6"/><path d="M0.600 2.400Q5.500 2.300 10.300 1V14.600Q5.500 15.800 1.300 15.400Q0.600 15.300 0.600 14.600Z" fill="#dcecfd" stroke="#94bce8" stroke-width=".8"/><rect x="2.600" y="3.400" width="6.400" height="10" fill="#e9f3ff"/><circle cx="6" cy="5.800" r="1.100" fill="#9ccdfb"/><path d="M3.800 10Q6 6.200 8.600 10Q6.200 11 3.800 10Z" fill="#9ccdfb"/><rect x="4" y="11.600" width="3.600" height=".8" fill="#c3defa"/></svg>
<div class="t lnk" style="left:672px;top:427px;font-size:13px;letter-spacing:-0.113px;">Списания</div>
<svg style="left:646px;top:453px" width="14" height="16" viewBox="0 0 14 16"><path d="M10.300 1.200L13.600 3.300V13.600L10.300 15.300Z" fill="#a4cdf3" stroke="#86b3e2" stroke-width=".6"/><path d="M0.600 2.400Q5.500 2.300 10.300 1V14.600Q5.500 15.800 1.300 15.400Q0.600 15.300 0.600 14.600Z" fill="#dcecfd" stroke="#94bce8" stroke-width=".8"/><rect x="2.600" y="3.400" width="6.400" height="10" fill="#e9f3ff"/><circle cx="6" cy="5.800" r="1.100" fill="#9ccdfb"/><path d="M3.800 10Q6 6.200 8.600 10Q6.200 11 3.800 10Z" fill="#9ccdfb"/><rect x="4" y="11.600" width="3.600" height=".8" fill="#c3defa"/></svg>
<div class="t lnk" style="left:672px;top:455px;font-size:13px;letter-spacing:-0.201px;">Сборки (комплектации)</div>
<svg style="left:646px;top:481px" width="14" height="16" viewBox="0 0 14 16"><path d="M10.300 1.200L13.600 3.300V13.600L10.300 15.300Z" fill="#a4cdf3" stroke="#86b3e2" stroke-width=".6"/><path d="M0.600 2.400Q5.500 2.300 10.300 1V14.600Q5.500 15.800 1.300 15.400Q0.600 15.300 0.600 14.600Z" fill="#dcecfd" stroke="#94bce8" stroke-width=".8"/><rect x="2.600" y="3.400" width="6.400" height="10" fill="#e9f3ff"/><circle cx="6" cy="5.800" r="1.100" fill="#9ccdfb"/><path d="M3.800 10Q6 6.200 8.600 10Q6.200 11 3.800 10Z" fill="#9ccdfb"/><rect x="4" y="11.600" width="3.600" height=".8" fill="#c3defa"/></svg>
<div class="t lnk" style="left:672px;top:483px;font-size:13px;letter-spacing:-0.131px;">Разбиения комплектаций</div>
<div class="a" style="left:15px;top:528px;width:300px;height:112px;background:#f0fff0"></div>
<div class="a" style="left:325px;top:528px;width:300px;height:114px;background:#f0fff0"></div>
<div class="a" style="left:635px;top:528px;width:300px;height:114px;background:#f0fff0"></div>
<svg style="left:25px;top:538px" width="48" height="48" viewBox="0 0 48 48"><defs><linearGradient id="pcg" x1="0" y1="0" x2="1" y2="1"><stop offset="0" stop-color="#0b8030"/><stop offset="1" stop-color="#0f9636"/></linearGradient><linearGradient id="pco" x1="0" y1="0" x2="1" y2="0"><stop offset="0" stop-color="#f08a30"/><stop offset="1" stop-color="#f7d23a"/></linearGradient></defs><path d="M1.200 2H3.600V4.600H4.900V46.800H3.600V40.200H1.400V26.600H3.600V21H1.400V10.600H3.600V3H1.200Z" fill="#c4c4c4" stroke="#a4a4a4" stroke-width=".4"/><path d="M4.800 6.900H16.800V13.800H46.300V39.400H4.800Z" fill="url(#pcg)"/><rect x="4.800" y="9.600" width="3.600" height="11.400" fill="#3ba6f0"/><rect x="4.800" y="25.200" width="3.600" height="14" fill="url(#pco)"/><g fill="#5f6c66" stroke="#93a29a" stroke-width=".8"><rect x="18.400" y="16.400" width="8.200" height="6.200" rx=".7"/><rect x="28.400" y="16.400" width="8.300" height="6.200" rx=".7"/><rect x="28.400" y="26.300" width="8.300" height="6.200" rx=".7"/></g><g fill="#eaf3ec"><rect x="12.800" y="12.200" width="1.400" height="1.600"/><rect x="12.800" y="15.800" width="1.400" height="1.600"/><rect x="15" y="27" width="3.600" height="1.700"/></g><g fill="#d0d8d2"><circle cx="42.400" cy="16.600" r="1.100"/><circle cx="42.400" cy="21.400" r="1.100"/></g><rect x="18.200" y="31.200" width="4.400" height="1.500" fill="#94a39b"/><rect x="20.500" y="27.200" width="3.400" height=".9" fill="#0b2813"/><rect x="12" y="24.400" width="2.300" height=".9" fill="#0b2813"/><rect x="39.400" y="27.400" width="6.600" height="3.200" fill="#4dbb5e" opacity=".65"/><g stroke="#3aa556" stroke-width=".5" opacity=".8"><path d="M10.600 8V22M12 26V36"/></g><rect x="18.900" y="36.900" width="21.100" height="2.500" fill="#cdb93a"/><rect x="41.100" y="36.900" width="5.200" height="2.500" fill="#cdb93a"/></svg>
<div class="t " style="left:84px;top:554px;font-size:21.33px;color:#000;letter-spacing:-1.073px;height:26px;line-height:26px;margin-top:-5px;">Ремонт и обслуживание</div>
<svg style="left:27px;top:606px" width="13" height="15" viewBox="0 0 13 15"><rect x="0" y=".6" width="13" height="14" rx=".8" fill="#dff0ff"/><rect x="0" y=".4" width="13" height="1.300" fill="#c2dcf3"/><rect x="11.700" y=".6" width="1.300" height="13" fill="#b0d0ee"/><rect x="0" y="12.400" width="13" height="1.200" fill="#9cc2e8"/><rect x="0.500" y="13.600" width="12" height="1" fill="#dfe9f0"/><path d="M0 .8H1.900V12.600L0 14.400Z" fill="#7ab1e8"/></svg>
<div class="t lnk" style="left:52px;top:607px;font-size:13px;letter-spacing:-0.107px;">Ремонты и обслуживание</div>
<div class="t gh" style="left:330px;top:534px;font-size:13px;letter-spacing:0.068px;">Создать документ</div>
<svg style="left:338px;top:559px" width="11" height="14" viewBox="0 0 11 14"><path d="M0.300 0H7.400L10.700 3.300V14H0.300Z" fill="#92c9f8"/><path d="M7.200 0.200L10.500 3.500H8.200Q7.200 3.500 7.200 2.500Z" fill="#e3f2ff"/><rect x="2.500" y="6.100" width="5.800" height="1.400" fill="#3d8edb"/><rect x="2.500" y="7.800" width="5.800" height="1.800" fill="#6fb0ec"/><rect x="2.500" y="10" width="4.800" height="1.300" fill="#3d8edb"/></svg>
<div class="t lnk" style="left:362px;top:560px;font-size:13px;letter-spacing:-0.067px;">Начать обслуживание</div>
<svg style="left:338px;top:587px" width="11" height="14" viewBox="0 0 11 14"><path d="M0.300 0H7.400L10.700 3.300V14H0.300Z" fill="#92c9f8"/><path d="M7.200 0.200L10.500 3.500H8.200Q7.200 3.500 7.200 2.500Z" fill="#e3f2ff"/><rect x="2.500" y="6.100" width="5.800" height="1.400" fill="#3d8edb"/><rect x="2.500" y="7.800" width="5.800" height="1.800" fill="#6fb0ec"/><rect x="2.500" y="10" width="4.800" height="1.300" fill="#3d8edb"/></svg>
<div class="t lnk" style="left:362px;top:588px;font-size:13px;letter-spacing:-0.072px;">Закончить обслуживание</div>
<svg style="left:338px;top:615px" width="11" height="14" viewBox="0 0 11 14"><path d="M0.300 0H7.400L10.700 3.300V14H0.300Z" fill="#92c9f8"/><path d="M7.200 0.200L10.500 3.500H8.200Q7.200 3.500 7.200 2.500Z" fill="#e3f2ff"/><rect x="2.500" y="6.100" width="5.800" height="1.400" fill="#3d8edb"/><rect x="2.500" y="7.800" width="5.800" height="1.800" fill="#6fb0ec"/><rect x="2.500" y="10" width="4.800" height="1.300" fill="#3d8edb"/></svg>
<div class="t lnk" style="left:362px;top:616px;font-size:13px;letter-spacing:-0.091px;">Изменить показатели оборудования</div>
<div class="t gh" style="left:640px;top:534px;font-size:13px;letter-spacing:0.114px;">Журналы</div>
<svg style="left:646px;top:558px" width="14" height="16" viewBox="0 0 14 16"><path d="M10.300 1.200L13.600 3.300V13.600L10.300 15.300Z" fill="#a4cdf3" stroke="#86b3e2" stroke-width=".6"/><path d="M0.600 2.400Q5.500 2.300 10.300 1V14.600Q5.500 15.800 1.300 15.400Q0.600 15.300 0.600 14.600Z" fill="#dcecfd" stroke="#94bce8" stroke-width=".8"/><rect x="2.600" y="3.400" width="6.400" height="10" fill="#e9f3ff"/><circle cx="6" cy="5.800" r="1.100" fill="#9ccdfb"/><path d="M3.800 10Q6 6.200 8.600 10Q6.200 11 3.800 10Z" fill="#9ccdfb"/><rect x="4" y="11.600" width="3.600" height=".8" fill="#c3defa"/></svg>
<div class="t lnk" style="left:672px;top:560px;font-size:13px;letter-spacing:-0.096px;">Начало обслуживаний</div>
<svg style="left:646px;top:586px" width="14" height="16" viewBox="0 0 14 16"><path d="M10.300 1.200L13.600 3.300V13.600L10.300 15.300Z" fill="#a4cdf3" stroke="#86b3e2" stroke-width=".6"/><path d="M0.600 2.400Q5.500 2.300 10.300 1V14.600Q5.500 15.800 1.300 15.400Q0.600 15.300 0.600 14.600Z" fill="#dcecfd" stroke="#94bce8" stroke-width=".8"/><rect x="2.600" y="3.400" width="6.400" height="10" fill="#e9f3ff"/><circle cx="6" cy="5.800" r="1.100" fill="#9ccdfb"/><path d="M3.800 10Q6 6.200 8.600 10Q6.200 11 3.800 10Z" fill="#9ccdfb"/><rect x="4" y="11.600" width="3.600" height=".8" fill="#c3defa"/></svg>
<div class="t lnk" style="left:672px;top:588px;font-size:13px;letter-spacing:-0.062px;">Окончания обслуживаний</div>
<svg style="left:646px;top:614px" width="14" height="16" viewBox="0 0 14 16"><path d="M10.300 1.200L13.600 3.300V13.600L10.300 15.300Z" fill="#a4cdf3" stroke="#86b3e2" stroke-width=".6"/><path d="M0.600 2.400Q5.500 2.300 10.300 1V14.600Q5.500 15.800 1.300 15.400Q0.600 15.300 0.600 14.600Z" fill="#dcecfd" stroke="#94bce8" stroke-width=".8"/><rect x="2.600" y="3.400" width="6.400" height="10" fill="#e9f3ff"/><circle cx="6" cy="5.800" r="1.100" fill="#9ccdfb"/><path d="M3.800 10Q6 6.200 8.600 10Q6.200 11 3.800 10Z" fill="#9ccdfb"/><rect x="4" y="11.600" width="3.600" height=".8" fill="#c3defa"/></svg>
<div class="t lnk" style="left:672px;top:616px;font-size:13px;letter-spacing:-0.084px;">Изменения показателей оборудования</div>
<div class="a" style="left:15px;top:661px;width:300px;height:160px;background:#fffff0"></div>
<div class="a" style="left:325px;top:661px;width:300px;height:142px;background:#fffff0"></div>
<div class="a" style="left:635px;top:661px;width:300px;height:142px;background:#fffff0"></div>
<svg style="left:25px;top:671px" width="48" height="48" viewBox="0 0 48 48"><defs><linearGradient id="ush" x1="0" y1="0" x2="0" y2="1"><stop offset="0" stop-color="#07070f"/><stop offset=".6" stop-color="#1a1a40"/><stop offset="1" stop-color="#4a4aa0"/></linearGradient><linearGradient id="usf" x1="0" y1="0" x2="1" y2="1"><stop offset="0" stop-color="#ffe74a"/><stop offset="1" stop-color="#f4b400"/></linearGradient><linearGradient id="usb" x1="0" y1="0" x2="0" y2="1"><stop offset="0" stop-color="#1a70e0"/><stop offset=".7" stop-color="#0a50bc"/><stop offset="1" stop-color="#2a7ae0"/></linearGradient><radialGradient id="usg" cx=".45" cy=".3" r=".8"><stop offset="0" stop-color="#52d23e"/><stop offset="1" stop-color="#07851c"/></radialGradient></defs><ellipse cx="30" cy="41.500" rx="17" ry="3.600" fill="#000" opacity=".18"/><ellipse cx="36" cy="37.200" rx="8.600" ry="3.800" fill="#e9e9fb" stroke="#8d8dc4" stroke-width=".7"/><path d="M33 30H39.500L40.500 36H32Z" fill="#d8d8f4"/><path d="M21 3.600L23 3L47.200 7.600L47.800 9.200V30.200L46.300 31L23.400 29.800Z" fill="#2a2a60" opacity=".6"/><path d="M19.800 4.200L46.300 8.400V30L22.200 28.800Z" fill="#f3f3ff" stroke="#a0a0d4" stroke-width=".7"/><path d="M26.700 8.400L42.600 11.400L42 26.400L27.600 24Z" fill="#0a6ee6"/><path d="M26.700 8.400L42.600 11.400L42.500 13L27 10Z" fill="#2a86ee"/><path d="M0.400 37C0.600 31.500 6 28.800 14 28.800C22 28.800 27.400 31.600 27.600 37C27.200 42 20.500 44.400 14 44.400C7.500 44.400 0.800 42 0.400 37Z" fill="url(#usb)" stroke="#1a1a50" stroke-width=".9"/><path d="M6 31.500Q9 34.500 13 34L15 36L17 34Q21 34.500 23.500 31.500Q19 33 15 33Q10 33 6 31.500Z" fill="#0a44a4"/><path d="M13 33.600L15 36L17 33.600Z" fill="#fff"/><ellipse cx="6" cy="39.500" rx="3.500" ry="2" fill="#9ac8ff" opacity=".6"/><circle cx="15.300" cy="20.400" r="10.900" fill="url(#usf)" stroke="#2a2a60" stroke-width=".6"/><path d="M4.500 18.400C5.200 12.600 9.800 9.400 15.300 9.400C20.200 9.400 24.400 12 25.800 15.400C19.500 19.600 10.500 19.800 4.500 18.400Z" fill="url(#ush)"/><circle cx="27.900" cy="30" r="9" fill="url(#usg)" stroke="#087a1c" stroke-width=".6"/><path d="M20.800 30L25.600 25.400V28.300H30.200V25.400L35 30L30.200 34.600V31.700H25.600V34.600Z" fill="#fff"/><ellipse cx="26" cy="35" rx="5" ry="2.400" fill="#fff" opacity=".28"/><rect x="0" y="47.100" width="47.500" height=".7" fill="#e6e6f4"/></svg>
<div class="t " style="left:84px;top:687px;font-size:21.33px;color:#000;letter-spacing:-0.353px;height:26px;line-height:26px;margin-top:-5px;">Сотрудники</div>
<svg style="left:27px;top:730px" width="13" height="15" viewBox="0 0 13 15"><rect x="0" y=".6" width="13" height="14" rx=".8" fill="#dff0ff"/><rect x="0" y=".4" width="13" height="1.300" fill="#c2dcf3"/><rect x="11.700" y=".6" width="1.300" height="13" fill="#b0d0ee"/><rect x="0" y="12.400" width="13" height="1.200" fill="#9cc2e8"/><rect x="0.500" y="13.600" width="12" height="1" fill="#dfe9f0"/><path d="M0 .8H1.900V12.600L0 14.400Z" fill="#7ab1e8"/></svg>
<div class="t lnk" style="left:52px;top:731px;font-size:13px;letter-spacing:-0.087px;">Ответственные сотрудники</div>
<svg style="left:27px;top:759px" width="12" height="13" viewBox="0 0 12 13"><rect x=".5" y=".5" width="11" height="12" fill="#fdfdfd" stroke="#84908f" stroke-width="1"/><rect x="1" y="1" width="10" height="2.800" fill="#8bc34a"/><path d="M1 4.200H11M1 6.900H11M1 9.600H11M4.200 1V12M7.800 1V12" stroke="#8a9696" stroke-width=".9"/></svg>
<div class="t lnk" style="left:52px;top:759px;font-size:13px;letter-spacing:-0.072px;">Логины и пароли</div>
<div class="t gh" style="left:330px;top:667px;font-size:13px;letter-spacing:0.068px;">Создать документ</div>
<svg style="left:338px;top:692px" width="11" height="14" viewBox="0 0 11 14"><path d="M0.300 0H7.400L10.700 3.300V14H0.300Z" fill="#92c9f8"/><path d="M7.200 0.200L10.500 3.500H8.200Q7.200 3.500 7.200 2.500Z" fill="#e3f2ff"/><rect x="2.500" y="6.100" width="5.800" height="1.400" fill="#3d8edb"/><rect x="2.500" y="7.800" width="5.800" height="1.800" fill="#6fb0ec"/><rect x="2.500" y="10" width="4.800" height="1.300" fill="#3d8edb"/></svg>
<div class="t lnk" style="left:362px;top:693px;font-size:13px;letter-spacing:-0.027px;">Закрепить сотрудников</div>
<svg style="left:338px;top:720px" width="11" height="14" viewBox="0 0 11 14"><path d="M0.300 0H7.400L10.700 3.300V14H0.300Z" fill="#92c9f8"/><path d="M7.200 0.200L10.500 3.500H8.200Q7.200 3.500 7.200 2.500Z" fill="#e3f2ff"/><rect x="2.500" y="6.100" width="5.800" height="1.400" fill="#3d8edb"/><rect x="2.500" y="7.800" width="5.800" height="1.800" fill="#6fb0ec"/><rect x="2.500" y="10" width="4.800" height="1.300" fill="#3d8edb"/></svg>
<div class="t lnk" style="left:362px;top:721px;font-size:13px;letter-spacing:-0.165px;">Снять закрепление</div>
<svg style="left:338px;top:748px" width="11" height="14" viewBox="0 0 11 14"><path d="M0.300 0H7.400L10.700 3.300V14H0.300Z" fill="#92c9f8"/><path d="M7.200 0.200L10.500 3.500H8.200Q7.200 3.500 7.200 2.500Z" fill="#e3f2ff"/><rect x="2.500" y="6.100" width="5.800" height="1.400" fill="#3d8edb"/><rect x="2.500" y="7.800" width="5.800" height="1.800" fill="#6fb0ec"/><rect x="2.500" y="10" width="4.800" height="1.300" fill="#3d8edb"/></svg>
<div class="t lnk" style="left:362px;top:749px;font-size:13px;letter-spacing:-0.085px;">Переместить сотрудников</div>
<svg style="left:338px;top:776px" width="11" height="14" viewBox="0 0 11 14"><path d="M0.300 0H7.400L10.700 3.300V14H0.300Z" fill="#92c9f8"/><path d="M7.200 0.200L10.500 3.500H8.200Q7.200 3.500 7.200 2.500Z" fill="#e3f2ff"/><rect x="2.500" y="6.100" width="5.800" height="1.400" fill="#3d8edb"/><rect x="2.500" y="7.800" width="5.800" height="1.800" fill="#6fb0ec"/><rect x="2.500" y="10" width="4.800" height="1.300" fill="#3d8edb"/></svg>
<div class="t lnk" style="left:362px;top:777px;font-size:13px;letter-spacing:0.17px;">Изменить</div>
<div class="t gh" style="left:640px;top:667px;font-size:13px;letter-spacing:0.114px;">Журналы</div>
<svg style="left:646px;top:692px" width="14" height="16" viewBox="0 0 14 16"><path d="M10.300 1.200L13.600 3.300V13.600L10.300 15.300Z" fill="#a4cdf3" stroke="#86b3e2" stroke-width=".6"/><path d="M0.600 2.400Q5.500 2.300 10.300 1V14.600Q5.500 15.800 1.300 15.400Q0.600 15.300 0.600 14.600Z" fill="#dcecfd" stroke="#94bce8" stroke-width=".8"/><rect x="2.600" y="3.400" width="6.400" height="10" fill="#e9f3ff"/><circle cx="6" cy="5.800" r="1.100" fill="#9ccdfb"/><path d="M3.800 10Q6 6.200 8.600 10Q6.200 11 3.800 10Z" fill="#9ccdfb"/><rect x="4" y="11.600" width="3.600" height=".8" fill="#c3defa"/></svg>
<div class="t lnk" style="left:672px;top:693px;font-size:13px;letter-spacing:-0.038px;">Закрепления сотрудников</div>
<svg style="left:646px;top:722px" width="14" height="16" viewBox="0 0 14 16"><path d="M10.300 1.200L13.600 3.300V13.600L10.300 15.300Z" fill="#a4cdf3" stroke="#86b3e2" stroke-width=".6"/><path d="M0.600 2.400Q5.500 2.300 10.300 1V14.600Q5.500 15.800 1.300 15.400Q0.600 15.300 0.600 14.600Z" fill="#dcecfd" stroke="#94bce8" stroke-width=".8"/><rect x="2.600" y="3.400" width="6.400" height="10" fill="#e9f3ff"/><circle cx="6" cy="5.800" r="1.100" fill="#9ccdfb"/><path d="M3.800 10Q6 6.200 8.600 10Q6.200 11 3.800 10Z" fill="#9ccdfb"/><rect x="4" y="11.600" width="3.600" height=".8" fill="#c3defa"/></svg>
<div class="t lnk" style="left:672px;top:723px;font-size:13px;letter-spacing:-0.188px;">Снятия закреплений</div>
<svg style="left:646px;top:752px" width="14" height="16" viewBox="0 0 14 16"><path d="M10.300 1.200L13.600 3.300V13.600L10.300 15.300Z" fill="#a4cdf3" stroke="#86b3e2" stroke-width=".6"/><path d="M0.600 2.400Q5.500 2.300 10.300 1V14.600Q5.500 15.800 1.300 15.400Q0.600 15.300 0.600 14.600Z" fill="#dcecfd" stroke="#94bce8" stroke-width=".8"/><rect x="2.600" y="3.400" width="6.400" height="10" fill="#e9f3ff"/><circle cx="6" cy="5.800" r="1.100" fill="#9ccdfb"/><path d="M3.800 10Q6 6.200 8.600 10Q6.200 11 3.800 10Z" fill="#9ccdfb"/><rect x="4" y="11.600" width="3.600" height=".8" fill="#c3defa"/></svg>
<div class="t lnk" style="left:672px;top:753px;font-size:13px;letter-spacing:0.01px;">Перемещения сотрудников</div>
</div>
<svg style="left:1420px;top:127px" width="7" height="5" viewBox="0 0 7 5"><path d="M0 4.500L3.500 0.500L7 4.500Z" fill="#c9c9c9"/></svg>
<div class="a" style="left:1419px;top:141px;width:8px;height:775px;background:#d4d4d4;border-radius:4px"></div>
<div class="a" style="left:1419px;top:141px;width:8px;height:733px;background:#9b9b9b;border-radius:4px"></div>
<svg style="left:1420px;top:926px" width="7" height="5" viewBox="0 0 7 5"><path d="M0 0.500L3.500 4.500L7 0.500Z" fill="#444"/></svg>
<div class="a" style="left:1438px;top:101px;width:1px;height:889px;background:repeating-linear-gradient(#c9c9c9 0 4px,transparent 4px 7px)"></div>
<div class="a" style="left:1443px;top:415px;width:476px;height:1px;background:repeating-linear-gradient(90deg,#c9c9c9 0 4px,transparent 4px 7px)"></div>
<div class="t " style="left:1459px;top:118px;font-size:16px;color:#0b6fce;font-weight:bold;letter-spacing:-0.09px;height:20px;line-height:20px;margin-top:-2px;">Текущие дела</div>
<svg style="left:1464px;top:159px" width="9" height="6" viewBox="0 0 9 6"><path d="M0.800 0.800L4.300 4.400L7.800 0.800" fill="none" stroke="#3a3a3a" stroke-width="1.200"/></svg>
<div class="t " style="left:1488px;top:153px;font-size:16.5px;color:#333;letter-spacing:0.039px;height:20px;line-height:20px;margin-top:-2px;">Администрирование</div>
<div class="a" style="left:1458px;top:180px;width:2px;height:63px;background:#0b6fce"></div>
<div class="t " style="left:1469px;top:182px;font-size:13px;color:#c9222e;letter-spacing:-0.105px;text-decoration:underline;text-underline-offset:1px;text-decoration-skip-ink:none;text-decoration-thickness:1px;">Оптимизировать программу</div>
<div class="t " style="left:1644px;top:182px;font-size:14px;color:#1a6fc4;">?</div>
<div class="t " style="left:1468px;top:208px;font-size:13px;color:#222;letter-spacing:-0.131px;">Проверить совместимость (1)</div>
<div class="t " style="left:1478px;top:228px;font-size:11px;color:#2b5bc9;letter-spacing:-0.037px;text-decoration:underline;text-underline-offset:1px;text-decoration-skip-ink:none;text-decoration-thickness:1px;">Дополнительные отчеты и обработки (1)</div>
<svg style="left:1464px;top:268px" width="9" height="6" viewBox="0 0 9 6"><path d="M0.800 0.800L4.300 4.400L7.800 0.800" fill="none" stroke="#3a3a3a" stroke-width="1.200"/></svg>
<div class="t " style="left:1488px;top:262px;font-size:16.5px;color:#333;letter-spacing:0.152px;height:20px;line-height:20px;margin-top:-2px;">Взаимодействия</div>
<div class="a" style="left:1458px;top:289px;width:2px;height:36px;background:#0b6fce"></div>
<div class="t " style="left:1469px;top:291px;font-size:13px;color:#2b55c9;letter-spacing:-0.188px;text-decoration:underline;text-underline-offset:1px;text-decoration-skip-ink:none;text-decoration-thickness:1px;">Почта (11)</div>
<div class="t " style="left:1477px;top:311px;font-size:11px;color:#222;letter-spacing:-0.122px;">Системная учетная запись (itdemo@softonit.ru) (11)</div>
<svg style="left:1464px;top:350px" width="9" height="6" viewBox="0 0 9 6"><path d="M0.800 0.800L4.300 4.400L7.800 0.800" fill="none" stroke="#3a3a3a" stroke-width="1.200"/></svg>
<div class="t " style="left:1488px;top:344px;font-size:16.5px;color:#333;letter-spacing:0.223px;height:20px;line-height:20px;margin-top:-2px;">Дела</div>
<svg style="left:1907px;top:160px" width="7" height="5" viewBox="0 0 7 5"><path d="M0 4.500L3.500 0.500L7 4.500Z" fill="#c9c9c9"/></svg>
<div class="a" style="left:1906px;top:174px;width:8px;height:162px;background:#d4d4d4;border-radius:4px"></div>
<div class="a" style="left:1906px;top:174px;width:8px;height:55px;background:#9b9b9b;border-radius:4px"></div>
<svg style="left:1907px;top:345px" width="7" height="5" viewBox="0 0 7 5"><path d="M0 0.500L3.500 4.500L7 0.500Z" fill="#444"/></svg>
<div class="btn" style="left:1770px;top:368px;width:89px;height:26px;"></div>
<div class="t " style="left:1785px;top:374px;font-size:13px;color:#222;letter-spacing:-0.392px;">Настроить</div>
<div class="btn" style="left:1869px;top:368px;width:29px;height:26px;"></div>
<svg style="left:1877px;top:374px" width="14" height="14" viewBox="0 0 14 14"><path d="M12.100 7.600A5.100 5.100 0 1 1 9.400 2.900" fill="none" stroke="#2ea836" stroke-width="1.800"/><path d="M8.200 0.300L13 0.800L11.200 5.600Z" fill="#2ea836"/></svg>
<div class="t " style="left:1458px;top:426px;font-size:16px;color:#0b6fce;font-weight:bold;letter-spacing:-0.135px;height:20px;line-height:20px;margin-top:-2px;">Мои заметки</div>
<div class="btn" style="left:1458px;top:459px;width:77px;height:26px;"></div>
<div class="t " style="left:1472px;top:465px;font-size:13px;color:#222;letter-spacing:-0.129px;">Создать</div>
<div class="btn" style="left:1544px;top:459px;width:105px;height:26px;"></div>
<div class="t " style="left:1558px;top:465px;font-size:13px;color:#222;letter-spacing:-0.112px;">Напомнить...</div>
<div class="a" style="left:1658px;top:460px;width:240px;height:25px;background:#fff;border:1px solid #a8a8a8;border-radius:3px"></div>
<div class="a" style="left:1876px;top:461px;width:1px;height:23px;background:#b0b0b0"></div>
<svg style="left:1883px;top:468px" width="7" height="7" viewBox="0 0 7 7"><path d="M1 1L6 6M6 1L1 6" stroke="#555" stroke-width="1.100"/></svg>
<div class="t " style="left:1661px;top:465px;font-size:13px;color:#c2c2c2;letter-spacing:0.032px;">Поиск (Ctrl+F)</div>
<div class="a" style="left:1458px;top:495px;width:440px;height:459px;border:1px solid #a2a2a2;border-top:1px solid #8f8f8f;background:#fff"></div>
<div class="a" style="left:1459px;top:497px;width:438px;height:42px;background:#7f7f7f"></div>
<svg style="left:1468px;top:503px" width="14" height="15" viewBox="0 0 14 15"><path d="M1 1.500Q1 .500 2 .500H9.500L13.500 4.500V13.500Q13.500 14.500 12.500 14.500H2Q1 14.500 1 13.500Z" fill="#ffa9b2" stroke="#f27f8c" stroke-width=".9"/><path d="M9.500 .500V3.500Q9.500 4.500 10.500 4.500H13.500" fill="none" stroke="#f27f8c" stroke-width=".9"/><g stroke="#ffd0d5" stroke-width=".9"><path d="M3 6.500H6M7 6.500H9M3 8.500H5M6 8.500H11.500M3 10.500H8M9 10.500H11.500M3 12.500H10"/></g></svg>
<div class="t " style="left:1491px;top:503px;font-size:13px;color:#2e2e3a;letter-spacing:-0.073px;">По закреплению сотрудников. Выполнить задание!, Закрепление</div>
<div class="t " style="left:1491px;top:519px;font-size:13px;color:#2e2e3a;letter-spacing:-0.06px;">сотрудников НФ00-000004 от 15.04.2013 23:22:18</div>
<svg style="left:1468px;top:548px" width="14" height="15" viewBox="0 0 14 15"><path d="M1 1.500Q1 .500 2 .500H9.500L13.500 4.500V13.500Q13.500 14.500 12.500 14.500H2Q1 14.500 1 13.500Z" fill="#ffe3a1" stroke="#f3bd54" stroke-width=".9"/><path d="M9.500 .500V3.500Q9.500 4.500 10.500 4.500H13.500" fill="none" stroke="#f3bd54" stroke-width=".9"/><g stroke="#fff1cf" stroke-width=".9"><path d="M3 6.500H6M7 6.500H9M3 8.500H5M6 8.500H11.500M3 10.500H8M9 10.500H11.500M3 12.500H10"/></g></svg>
<div class="t " style="left:1491px;top:548px;font-size:13px;color:#222;letter-spacing:0.025px;">Создали заметку по процессу, Задача на изменение</div>
<div class="t " style="left:1491px;top:564px;font-size:13px;color:#222;letter-spacing:-0.044px;">программного продукта (Процессы)</div>
<div class="a" style="left:1459px;top:585px;width:438px;height:1px;background:#e3e3e3"></div>
<div class="a" style="left:1801px;top:953px;width:97px;height:22px;border:1px solid #a2a2a2;background:#fff"></div>
<div class="a" style="left:1825px;top:953px;width:1px;height:22px;background:#a2a2a2"></div>
<div class="a" style="left:1849px;top:953px;width:1px;height:22px;background:#a2a2a2"></div>
<div class="a" style="left:1873px;top:953px;width:1px;height:22px;background:#a2a2a2"></div>
<svg style="left:1807px;top:959px" width="12" height="10" viewBox="0 0 12 10"><rect x="1" y="1" width="10" height="1.400" fill="#9a9a9a"/><path d="M1 8.500L6 3.500L11 8.500Z" fill="#9a9a9a"/></svg>
<svg style="left:1831px;top:959px" width="12" height="10" viewBox="0 0 12 10"><path d="M1 7.500L6 2.500L11 7.500Z" fill="#9a9a9a"/></svg>
<svg style="left:1855px;top:959px" width="12" height="10" viewBox="0 0 12 10"><path d="M1 2.500L6 7.500L11 2.500Z" fill="#9a9a9a"/></svg>
<svg style="left:1879px;top:959px" width="12" height="10" viewBox="0 0 12 10"><path d="M1 1.500L6 6.500L11 1.500Z" fill="#9a9a9a"/><rect x="1" y="7.600" width="10" height="1.400" fill="#9a9a9a"/></svg>
<div class="btn" style="left:1233px;top:948px;width:30px;height:26px;"></div>
<svg style="left:1241px;top:954px" width="14" height="14" viewBox="0 0 14 14"><path d="M12.100 7.600A5.100 5.100 0 1 1 9.400 2.900" fill="none" stroke="#2ea836" stroke-width="1.800"/><path d="M8.200 0.300L13 0.800L11.200 5.600Z" fill="#2ea836"/></svg>
<div class="btn" style="left:1272px;top:948px;width:30px;height:26px;"></div>
<svg style="left:1279px;top:953px" width="16" height="16" viewBox="0 0 16 16"><g fill="none" stroke="#555" stroke-width="1.100"><circle cx="8" cy="8" r="2.300"/><path d="M6.700 1.200H9.300L9.700 3.100L11.300 4L13.100 3.300L14.400 5.500L13 6.900V9.100L14.400 10.500L13.100 12.700L11.300 12L9.700 12.900L9.300 14.800H6.700L6.300 12.900L4.700 12L2.900 12.700L1.600 10.500L3 9.100V6.900L1.600 5.500L2.900 3.300L4.700 4L6.300 3.100Z" stroke-linejoin="round"/></g></svg>
<div class="btn" style="left:1311px;top:948px;width:61px;height:26px;"></div>
<div class="t " style="left:1325px;top:954px;font-size:13px;color:#3a3a3a;letter-spacing:0.416px;">Еще</div>
<svg style="left:1358px;top:960px" width="7" height="4" viewBox="0 0 7 4"><path d="M0.500 0.500L3.500 3.500L6.500 0.500Z" fill="#333"/></svg>
<div class="btn" style="left:1381px;top:948px;width:30px;height:26px;"></div>
<div class="t " style="left:1391.5px;top:954px;font-size:16px;color:#000;">?</div>
</body></html>
